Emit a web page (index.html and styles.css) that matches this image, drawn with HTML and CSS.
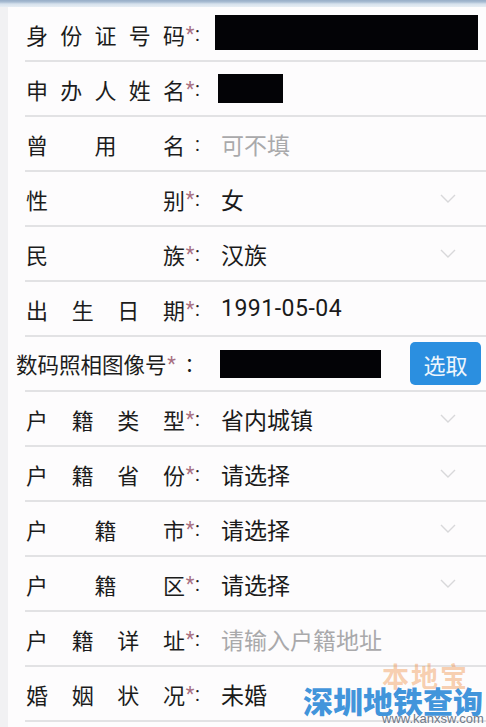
FILE: index.html
```html
<!DOCTYPE html>
<html>

<head>
    <meta charset="utf-8" />
    <title>户籍信息</title>
    <link rel="stylesheet" href="styles.css">
</head>

<body>
    <div class="screen">
        <div class="topBar"></div>
        <div class="page">
            <!-- 户籍信息表单 -->
            <form class="form">
                <div class="row">
                    <span class="label"><span class="name">身份证号码</span><i>*</i><b>:</b></span>
                    <span class="mask maskId"></span>
                </div>
                <div class="row">
                    <span class="label"><span class="name">申办人姓名</span><i>*</i><b>:</b></span>
                    <span class="mask maskName"></span>
                </div>
                <div class="row">
                    <span class="label"><span class="name">曾用名</span><i></i><b>:</b></span>
                    <span class="value hint">可不填</span>
                </div>
                <div class="row">
                    <span class="label"><span class="name">性别</span><i>*</i><b>:</b></span>
                    <span class="value">女</span>
                    <svg class="arrow" viewBox="0 0 16 9"><polyline points="1,1 8,8 15,1" /></svg>
                </div>
                <div class="row">
                    <span class="label"><span class="name">民族</span><i>*</i><b>:</b></span>
                    <span class="value">汉族</span>
                    <svg class="arrow" viewBox="0 0 16 9"><polyline points="1,1 8,8 15,1" /></svg>
                </div>
                <div class="row">
                    <span class="label"><span class="name">出生日期</span><i>*</i><b>:</b></span>
                    <span class="value digits">1991-05-04</span>
                </div>
                <div class="row photoRow">
                    <span class="photoLabel">数码照相图像号<i>*</i><b>：</b></span>
                    <span class="mask maskPhoto"></span>
                    <button type="button" class="pick">选取</button>
                </div>
                <div class="row">
                    <span class="label"><span class="name">户籍类型</span><i>*</i><b>:</b></span>
                    <span class="value">省内城镇</span>
                    <svg class="arrow" viewBox="0 0 16 9"><polyline points="1,1 8,8 15,1" /></svg>
                </div>
                <div class="row">
                    <span class="label"><span class="name">户籍省份</span><i>*</i><b>:</b></span>
                    <span class="value">请选择</span>
                    <svg class="arrow" viewBox="0 0 16 9"><polyline points="1,1 8,8 15,1" /></svg>
                </div>
                <div class="row">
                    <span class="label"><span class="name">户籍市</span><i>*</i><b>:</b></span>
                    <span class="value">请选择</span>
                    <svg class="arrow" viewBox="0 0 16 9"><polyline points="1,1 8,8 15,1" /></svg>
                </div>
                <div class="row">
                    <span class="label"><span class="name">户籍区</span><i>*</i><b>:</b></span>
                    <span class="value">请选择</span>
                    <svg class="arrow" viewBox="0 0 16 9"><polyline points="1,1 8,8 15,1" /></svg>
                </div>
                <div class="row">
                    <span class="label"><span class="name">户籍详址</span><i>*</i><b>:</b></span>
                    <span class="value hint">请输入户籍地址</span>
                </div>
                <div class="row">
                    <span class="label"><span class="name">婚姻状况</span><i>*</i><b>:</b></span>
                    <span class="value">未婚</span>
                </div>
            </form>
        </div>
        <!-- 水印 -->
        <div class="mark">
            <span class="markTop">本地宝</span>
            <span class="markMain">深圳地铁查询</span>
            <span class="markUrl">www.kanxsw.com</span>
        </div>
    </div>
</body>

</html>
```

FILE: styles.css
```css
* {
    box-sizing: border-box;
}

body {
    margin: 0;
    background-color: #fdfcfd;
    font-family: Roboto, "Noto Sans CJK SC", sans-serif;
    color: #1c1c1c;
}

.screen {
    position: relative;
    width: 486px;
    height: 727px;
    overflow: hidden;
    background: linear-gradient(to right, #f1f1f3 0, #f1f1f3 8px, #fdfcfd 8px);
}

.topBar {
    height: 7px;
    background: linear-gradient(to bottom, #97adc7 0, #a9bdd3 2px, #d6e1ec 4px, #e6edf4 7px);
}

.form {
    margin: 0;
}

.form .row {
    display: flex;
    align-items: center;
    height: 55px;
    margin-left: 25px;
    border-bottom: 2px solid #e2e2e4;
}

.form .label {
    display: flex;
    align-items: center;
    font-size: 22px;
    margin-left: 1px;
}

.form .name {
    display: inline-block;
    width: 159px;
    text-align: justify;
    text-align-last: justify;
}

.form i {
    display: inline-block;
    width: 10px;
    font-style: normal;
    font-size: 20px;
    color: #a76f82;
    text-align: center;
}

.form b {
    display: inline-block;
    width: 20px;
    font-weight: 400;
    font-size: 20px;
}

.form .value {
    font-size: 23px;
    margin-left: 6px;
    color: #1a1a1a;
}

.form .digits {
    letter-spacing: 0.5px;
}

.form .hint {
    color: #a9a9ab;
}

.form .arrow {
    width: 16px;
    height: 9px;
    margin-left: auto;
    margin-right: 30px;
    fill: none;
    stroke: #d8d8da;
    stroke-width: 1.4;
}

.form .mask {
    display: inline-block;
    background-color: #030306;
}

.form .maskId {
    width: 263px;
    height: 35px;
    margin-left: 0;
    margin-top: -3px;
}

.form .maskName {
    width: 65px;
    height: 29px;
    margin-left: 3px;
}

.form .photoRow .photoLabel {
    display: flex;
    align-items: center;
    margin-left: -9px;
    font-size: 21.5px;
    white-space: nowrap;
}

.form .photoRow b {
    width: 28px;
    text-align: right;
}

.form .maskPhoto {
    width: 161px;
    height: 28px;
    margin-left: 15px;
}

.form .pick {
    width: 71px;
    height: 43px;
    margin-left: auto;
    margin-right: 5px;
    border: 0;
    border-radius: 5px;
    background-color: #2b8fe0;
    color: #eef6fd;
    font-family: "Noto Sans CJK SC", sans-serif;
    font-size: 22px;
    padding: 0;
}

.mark {
    position: absolute;
    left: 300px;
    top: 650px;
    width: 186px;
    height: 77px;
    pointer-events: none;
}

.mark .markTop {
    position: absolute;
    left: 82px;
    top: 12px;
    font-family: "Noto Sans CJK SC", sans-serif;
    font-weight: 700;
    font-size: 27px;
    line-height: 1;
    color: rgba(240, 150, 80, 0.45);
    letter-spacing: 2px;
}

.mark .markMain {
    position: absolute;
    left: 3px;
    top: 35px;
    font-family: "Noto Sans CJK SC", sans-serif;
    font-weight: 900;
    font-size: 30px;
    line-height: 1;
    color: rgba(40, 135, 215, 0.88);
    white-space: nowrap;
}

.mark .markUrl {
    position: absolute;
    left: 82px;
    top: 62px;
    font-family: "Liberation Sans", sans-serif;
    font-size: 13px;
    line-height: 1;
    color: #6f7a8a;
}
```
